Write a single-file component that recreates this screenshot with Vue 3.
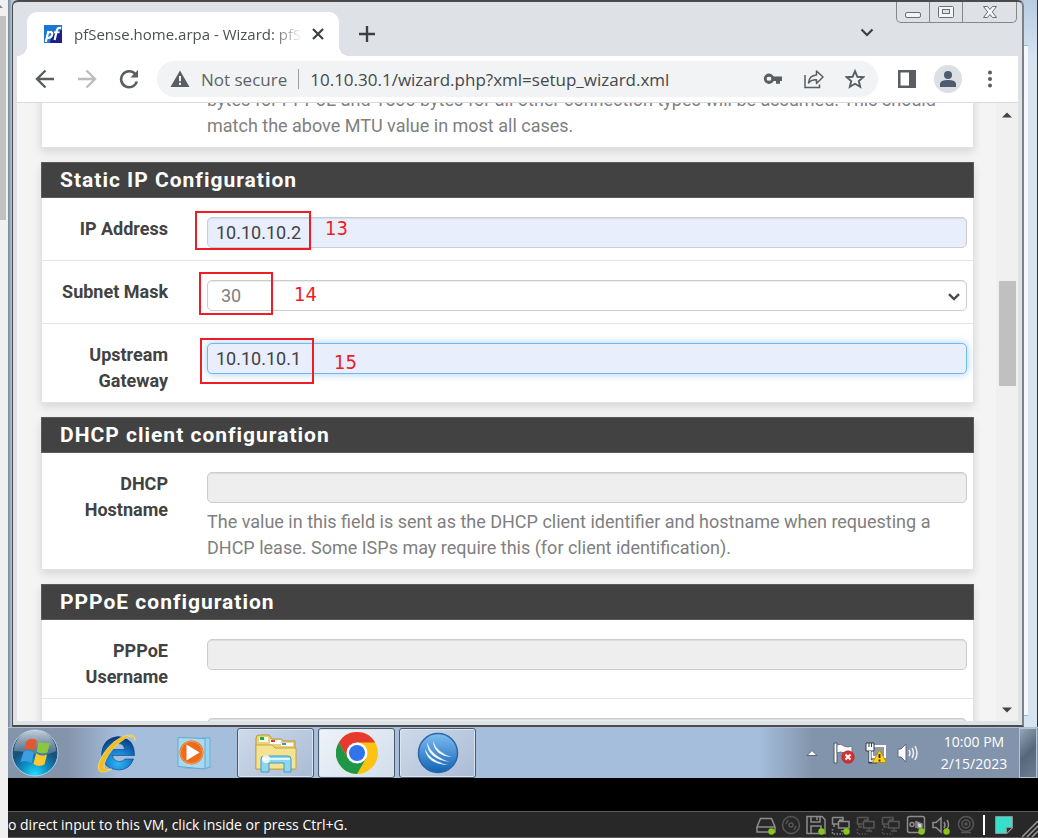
<script setup>
import { ref } from 'vue'

const ipAddress = ref('10.10.10.2')
const subnetMask = ref('30')
const gateway = ref('10.10.10.1')
const dhcpHostname = ref('')
const pppoeUsername = ref('')
const pppoePassword = ref('')
const address = ref('10.10.30.1/wizard.php?xml=setup_wizard.xml')
</script>

<template>
  <div class="host">
    <div class="host-scroll">
      <svg class="host-arrow" viewBox="0 0 8 16"><path d="M0 5 L3 8 H0Z" fill="#8a8a8a" /></svg>
      <div class="host-thumb"></div>
    </div>

    <div class="vm">
      <div class="desktop">
        <main class="window">
          <header class="tabstrip">
            <div class="tab">
              <svg class="favicon" viewBox="0 0 18 18">
                <rect width="18" height="18" fill="#1c1f86" />
                <path d="M0 0H18V5Q10 7 7 13L6 18H0Z" fill="#1976d2" />
                <g fill="none" stroke="#fff" stroke-width="2.2">
                  <path d="M4.4 6 L1.8 17" />
                  <path d="M4 8 Q8.4 5.5 8.2 9.4 Q7.4 13.6 3 12.6" />
                  <path d="M17 3 Q13.5 2.2 12.8 5.4 L10.6 15" />
                  <path d="M10 7.3H15.6" stroke-width="1.8" />
                </g>
              </svg>
              <span class="tab-title">pfSense.home.arpa - Wizard: pfSense</span>
              <button class="icon-btn tab-close" aria-label="Close tab">
                <svg width="12" height="12" viewBox="0 0 12 12"><path d="M1 1 L11 11 M11 1 L1 11" stroke="#3c4043" stroke-width="2.2" /></svg>
              </button>
            </div>
            <button class="icon-btn new-tab" aria-label="New tab">
              <svg width="16" height="16" viewBox="0 0 16 16"><path d="M8 0V16M0 8H16" stroke="#3c4043" stroke-width="2.4" /></svg>
            </button>
            <button class="icon-btn tab-search" aria-label="Search tabs">
              <svg width="14" height="10" viewBox="0 0 14 10"><path d="M1.5 1.5 L7 7 L12.5 1.5" fill="none" stroke="#3c4043" stroke-width="2.2" /></svg>
            </button>
            <div class="win-controls">
              <button class="icon-btn" aria-label="Minimize">
                <svg width="18" height="20" viewBox="0 0 18 20"><rect x="1.5" y="10.5" width="15" height="5" rx="1.5" fill="#f4f5f6" stroke="#6b6d70" /></svg>
              </button>
              <button class="icon-btn" aria-label="Maximize">
                <svg width="18" height="20" viewBox="0 0 18 20" stroke="#6b6d70" fill="#f4f5f6"><rect x="1.5" y="4.5" width="15" height="11" rx="1" /><rect x="5.5" y="7.5" width="7" height="4" fill="#dee1e6" /></svg>
              </button>
              <button class="icon-btn win-close" aria-label="Close">
                <svg width="16" height="20" viewBox="0 0 16 20"><path d="M1.500 4.500H5.500L8 7.400L10.500 4.500H14.500L10.300 9.900L14.500 15.500H10.500L8 12.500L5.500 15.500H1.500L5.700 9.900Z" fill="#f4f5f6" stroke="#6b6d70" /></svg>
              </button>
            </div>
          </header>

          <nav class="toolbar">
            <button class="icon-btn nav-btn" aria-label="Back">
              <svg width="20" height="20" viewBox="0 0 20 20" fill="none" stroke="#5a5e63" stroke-width="2.400"><path d="M19 10H2.500M10.500 1.500L2 10L10.500 18.500" /></svg>
            </button>
            <button class="icon-btn nav-btn" aria-label="Forward">
              <svg width="20" height="20" viewBox="0 0 20 20" fill="none" stroke="#bcbdbf" stroke-width="2.400"><path d="M1 10H17.500M9.500 1.500L18 10L9.500 18.500" /></svg>
            </button>
            <button class="icon-btn nav-btn" aria-label="Reload">
              <svg width="20" height="20" viewBox="0 0 20 20"><path d="M16.200 5A8 8 0 1 0 17.800 12.500" fill="none" stroke="#5a5e63" stroke-width="2.600" /><path d="M19 1V8.600H11.400Z" fill="#5a5e63" /></svg>
            </button>
            <div class="omnibox">
              <svg class="warn" width="20" height="18" viewBox="0 0 20 18"><path d="M10 0.500L19.500 17H0.500Z" fill="#5a5e63" /><path d="M10 6V11.200M10 12.800V15" stroke="#f1f3f4" stroke-width="2" /></svg>
              <span class="insecure">Not secure</span>
              <span class="divider"></span>
              <input v-model="address" class="address" type="text" aria-label="Address" />
              <button class="icon-btn omni-btn" aria-label="Passwords">
                <svg width="20" height="20" viewBox="0 0 20 20"><path fill-rule="evenodd" d="M10.700 7.500A5.200 5.200 0 1 0 10.700 12H13V14.800H17V12H19V7.500ZM6 7.900A1.900 1.900 0 1 1 6 11.600A1.900 1.900 0 1 1 6 7.900Z" fill="#5a5e63" /></svg>
              </button>
              <button class="icon-btn omni-btn" aria-label="Share">
                <svg width="20" height="20" viewBox="0 0 20 20" fill="none" stroke="#5a5e63" stroke-width="1.500"><path d="M1 6V18.500H15.500V15.500" /><path d="M12.500 2V6Q5 6.500 4.500 14Q7 10.500 12.500 10.700V14.500L19 8Z" stroke-linejoin="round" /></svg>
              </button>
              <button class="icon-btn omni-btn" aria-label="Bookmark">
                <svg width="20" height="20" viewBox="0 0 20 20"><path d="M10 2.200L12.400 7.800L18.300 8.200L13.800 12L15.200 17.900L10 14.800L4.800 17.900L6.200 12L1.700 8.200L7.600 7.800Z" fill="none" stroke="#5a5e63" stroke-width="1.900" /></svg>
              </button>
            </div>
            <button class="icon-btn side-btn" aria-label="Side panel">
              <svg width="18" height="18" viewBox="0 0 18 18"><rect x="1.250" y="1.250" width="15.500" height="15.500" fill="#fff" stroke="#5a5e63" stroke-width="2.500" /><rect x="11" y="1" width="6" height="16" fill="#5a5e63" /></svg>
            </button>
            <button class="icon-btn profile" aria-label="Profile">
              <svg width="28" height="28" viewBox="0 0 28 28"><circle cx="14" cy="10" r="4" fill="#4f5b6e" /><path d="M6 22V19Q6 15 14 15Q22 15 22 19V22Z" fill="#4f5b6e" /></svg>
            </button>
            <button class="icon-btn menu-btn" aria-label="Menu">
              <svg width="6" height="18" viewBox="0 0 6 18" fill="#5a5e63"><circle cx="3" cy="2.500" r="2" /><circle cx="3" cy="9" r="2" /><circle cx="3" cy="15.500" r="2" /></svg>
            </button>
          </nav>

          <div class="viewport">
            <div class="page">
              <div class="scrolled">
                <section class="panel">
                  <div class="row">
                    <span></span>
                    <p class="help">bytes for PPPoE and 1500 bytes for all other connection types will be assumed. This should match the above MTU value in most all cases.</p>
                  </div>
                </section>

                <section class="panel">
                  <h2>Static IP Configuration</h2>
                  <div class="row">
                    <label for="ip">IP Address</label>
                    <div class="control">
                      <input id="ip" v-model="ipAddress" class="field filled" type="text" />
                      <span class="mark mark-ip"></span>
                      <span class="num num-ip">13</span>
                    </div>
                  </div>
                  <div class="row">
                    <label for="mask">Subnet Mask</label>
                    <div class="control">
                      <select id="mask" v-model="subnetMask" class="field">
                        <option>30</option>
                      </select>
                      <svg class="caret" width="12" height="8" viewBox="0 0 12 8"><path d="M1 1.200L6 6L11 1.200" fill="none" stroke="#4a4a4a" stroke-width="2.400" /></svg>
                      <span class="mark mark-mask"></span>
                      <span class="num num-mask">14</span>
                    </div>
                  </div>
                  <div class="row">
                    <label for="gw">Upstream Gateway</label>
                    <div class="control">
                      <input id="gw" v-model="gateway" class="field filled active" type="text" />
                      <span class="mark mark-gw"></span>
                      <span class="num num-gw">15</span>
                    </div>
                  </div>
                </section>

                <section class="panel">
                  <h2>DHCP client configuration</h2>
                  <div class="row">
                    <label for="dhcp">DHCP Hostname</label>
                    <div class="control">
                      <input id="dhcp" v-model="dhcpHostname" class="field" type="text" disabled />
                      <p class="help below">The value in this field is sent as the DHCP client identifier and hostname when requesting a DHCP lease. Some ISPs may require this (for client identification).</p>
                    </div>
                  </div>
                </section>

                <section class="panel">
                  <h2>PPPoE configuration</h2>
                  <div class="row">
                    <label for="pppu">PPPoE Username</label>
                    <div class="control"><input id="pppu" v-model="pppoeUsername" class="field" type="text" disabled /></div>
                  </div>
                  <div class="row">
                    <span></span>
                    <div class="control"><input v-model="pppoePassword" class="field" type="password" aria-label="Password" disabled /></div>
                  </div>
                </section>
              </div>
            </div>
            <div class="scrollbar">
              <svg width="10" height="6" viewBox="0 0 10 6"><path d="M0 5.500L5 0.500L10 5.500Z" fill="#444" /></svg>
              <div class="track"><div class="thumb"></div></div>
              <svg width="10" height="6" viewBox="0 0 10 6"><path d="M0 0.500L5 5.500L10 0.500Z" fill="#444" /></svg>
            </div>
          </div>
        </main>
        <aside class="behind"><div class="behind-page"></div></aside>
      </div>

      <footer class="taskbar">
        <button class="icon-btn orb" aria-label="Start">
          <svg width="48" height="48" viewBox="0 0 48 48">
            <defs>
              <radialGradient id="orb" cx="50%" cy="98%" r="85%"><stop offset="0" stop-color="#22e0ff" /><stop offset=".35" stop-color="#0c8fc4" /><stop offset=".7" stop-color="#174f7c" /><stop offset="1" stop-color="#3c5268" /></radialGradient>
              <linearGradient id="gloss" x1="0" y1="0" x2="0" y2="1"><stop offset="0" stop-color="#dbe6ee" stop-opacity=".85" /><stop offset="1" stop-color="#9fb6c8" stop-opacity=".3" /></linearGradient>
            </defs>
            <circle cx="24" cy="24" r="23" fill="url(#orb)" stroke="#a9d0e6" />
            <path d="M3 22A21 21 0 0 1 45 22Q34 28 24 25Q12 22 3 22Z" fill="url(#gloss)" />
            <path d="M15.500 12Q20.500 8 26 11.500L23.500 21.500Q18 18.500 13 21Z" fill="#e4582c" />
            <path d="M28 12.500Q33 15 39 13.500L36.500 23.500Q31 26 25.500 22.500Z" fill="#8cc63f" />
            <path d="M12.500 23Q17.500 20.500 23 23.500L20.500 34Q15.500 31 9.500 33Z" fill="#3b9fe0" />
            <path d="M25 24.500Q30.500 28 36 25.500L33.500 35.500Q28 38.500 22.500 35Z" fill="#fdc82f" />
          </svg>
        </button>
        <button class="icon-btn ie" aria-label="Internet Explorer">
          <svg width="44" height="42" viewBox="0 0 44 42">
            <defs><radialGradient id="ie" cx="50%" cy="80%" r="80%"><stop offset="0" stop-color="#2db4f5" /><stop offset=".55" stop-color="#1377ca" /><stop offset="1" stop-color="#0b3672" /></radialGradient></defs>
            <path fill-rule="evenodd" d="M39.500 23.500H17.500Q18.500 29.500 24.500 29.500Q28 29.500 30 27H38.500Q34.500 38 23.500 38Q7.500 37 6.500 21.500Q8 6 23 4.500Q40 6 39.500 23.500ZM17.500 17.500H29.500Q29 11.500 23.500 11.500Q18.500 12 17.500 17.500Z" fill="url(#ie)" stroke="#0d4180" stroke-width=".600" />
            <path d="M40 8.500Q41 1 31 3.500Q18 7.500 9 21Q0 36 5 39.500Q9 41.500 17 37Q10 39 9 35Q9 28 17 18Q26 8 34 4.500Q39 3.500 40 8.500Z" fill="#f3bd24" stroke="#fbdc67" stroke-width=".800" />
          </svg>
        </button>
        <button class="icon-btn wmp" aria-label="Media Player">
          <svg width="38" height="36" viewBox="0 0 38 36">
            <path d="M8 4L33 2V32L38 31L30 34H8Z" fill="#8db4d2" /><path d="M26 3H33V32L26 34Z" fill="#9bd3ed" stroke="#6aaed0" />
            <path d="M1 2.500L28 3.500V34L1 31.500Z" fill="#a9d9f0" stroke="#62a9cf" /><circle cx="14.500" cy="17.500" r="12" fill="#ed6b1c" /><circle cx="14.500" cy="17.500" r="11" fill="none" stroke="#f6a04f" />
            <path d="M9.500 9.500L22.500 17.500L9.500 25.500Z" fill="#fff" />
          </svg>
        </button>
        <div class="tasks">
          <button class="icon-btn task" aria-label="Explorer">
            <svg width="44" height="40" viewBox="0 0 44 40">
              <path d="M2 36V5Q2 2 5 2H15L18 6H27L30 8H41V36Z" fill="#ead277" stroke="#b7973e" />
              <path d="M5 4H14V9H5ZM16 7H27V11H16ZM27 10H39V13H27Z" fill="#fff" /><path d="M6 4H10V7H6Z" fill="#15b52c" /><path d="M17 7H21V9H17Z" fill="#d5482d" /><path d="M28 10H32V12H28Z" fill="#2a9bea" />
              <path d="M2 36V12H18L21 15H42V36Z" fill="#f6e391" stroke="#c3a54e" />
              <path d="M7 39V26Q7 23 10 23H34Q37 23 37 26V39H30V30H15V39Z" fill="#8ed6f0" stroke="#409cc2" /><path d="M8 26H36" stroke="#d7f6ff" stroke-width="2" /><circle cx="12" cy="26" r="4" fill="#fff" opacity=".800" />
            </svg>
          </button>
          <button class="icon-btn task current" aria-label="Chrome">
            <svg width="42" height="42" viewBox="0 0 42 42">
              <circle cx="21" cy="21" r="21" fill="#fdc312" />
              <path d="M2.800 10.500A21 21 0 0 1 39.200 10.500H21L11.900 26.300Z" fill="#e53a2d" />
              <path d="M2.800 10.500A21 21 0 0 0 21 42L30.100 26.300Q21 34 11.900 26.300Z" fill="#1f9546" />
              <circle cx="21" cy="21" r="10.500" fill="#fff" /><circle cx="21" cy="21" r="8" fill="#2f74ea" />
            </svg>
          </button>
          <button class="icon-btn task" aria-label="Winbox">
            <svg width="42" height="42" viewBox="0 0 42 42">
              <defs><linearGradient id="wb" x1="0" y1="0" x2="0" y2="1"><stop offset="0" stop-color="#7fbdf2" /><stop offset="1" stop-color="#1263b5" /></linearGradient></defs>
              <circle cx="21" cy="21" r="19.500" fill="url(#wb)" stroke="#2a66a3" stroke-width="1.500" />
              <g fill="#eef7ff"><path d="M8 17Q10 32 31 33Q13 29 8 17Z" /><path d="M10 10Q10 27 33 30Q14 24 10 10Z" /><path d="M16 9Q17 24 35 25Q20 21 16 9Z" /></g>
            </svg>
          </button>
        </div>
        <div class="tray">
          <svg width="12" height="8" viewBox="0 0 12 8"><path d="M1 6.500L6 1.500L11 6.500Z" fill="#fff" stroke="#586880" /></svg>
          <svg width="22" height="22" viewBox="0 0 22 22"><path d="M1 1H4V21H1Z" fill="#fff" stroke="#4a5566" /><path d="M4 3Q8 1 11 4Q15 6 19 4V12Q14 14 11 11Q8 9 4 11Z" fill="#fff" stroke="#6b7686" /><circle cx="15" cy="15" r="6.200" fill="#dc2f2f" stroke="#a81d1d" stroke-width=".600" /><path d="M12.500 12.500L17.500 17.500M17.500 12.500L12.500 17.500" stroke="#fff" stroke-width="2" /></svg>
          <svg width="22" height="22" viewBox="0 0 22 22"><path d="M7 4H20V15H7Z" fill="#8d99a8" stroke="#fff" stroke-width="2" /><path d="M5 8V20H12" fill="none" stroke="#303a48" stroke-width="3" /><path d="M1 1H9V9H1Z" fill="#fff" stroke="#303a48" /><path d="M4 1V5M6.500 1V5" stroke="#303a48" /><path d="M5 9V19H12" fill="none" stroke="#fff" stroke-width="1.600" /><path d="M14.500 8L21.500 20.500H7.500Z" fill="#fbd321" stroke="#b98e06" /><path d="M14.500 12V16M14.500 17.500V19.500" stroke="#222" stroke-width="1.800" /></svg>
          <svg width="22" height="22" viewBox="0 0 22 22"><path d="M1 7H4L9 2V20L4 15H1Z" fill="#fff" stroke="#5d6a7c" /><path d="M12 8Q14 11 12 14M15 6Q18 11 15 16M18 4Q22 11 18 18" fill="none" stroke="#eef2f7" stroke-width="1.500" /></svg>
          <time class="clock"><span>10:00 PM</span><span>2/15/2023</span></time>
        </div>
        <button class="icon-btn show-desktop" aria-label="Show desktop"></button>
      </footer>

      <div class="letterbox"></div>

      <div class="statusbar">
        <span class="status-text">o direct input to this VM, click inside or press Ctrl+G.</span>
        <div class="devices">
          <svg class="dev on" viewBox="0 0 20 20"><path d="M4.500 3.500H15.500L19 12V17H1V12ZM1 12H19" /><circle class="dot" cx="15.500" cy="16.500" r="3.200" /></svg>
          <svg class="dev" viewBox="0 0 20 20"><circle cx="10" cy="10" r="8.500" /><circle cx="10" cy="10" r="2" /><path d="M5 9L7 5M13 15L15 11" /></svg>
          <svg class="dev on" viewBox="0 0 20 20"><path d="M1 1.500H16L19 4.500V18.500H1ZM5 1.500V7H14V1.500M11 2V5M5 18V11H15V18" /><circle class="dot" cx="15.500" cy="16.500" r="3.200" /></svg>
          <svg class="dev on" viewBox="0 0 20 20"><path d="M1.500 2.500H12V5H8M1.500 2.500V9H7M7.500 6.500H18V13H7.500ZM10 16H16M3 9V12" /><path d="M1.500 14V19H12" stroke-dasharray="1.500 1.500" /><circle class="dot" cx="15.500" cy="16.500" r="3.200" /></svg>
          <svg class="dev" viewBox="0 0 20 20"><path d="M1.500 2.500H12V5H8M1.500 2.500V9H7M7.500 6.500H18V13H7.500ZM13 13V16M10 16H16M3 9V12H6" /><path d="M1.500 14V19H12" stroke-dasharray="1.500 1.500" /></svg>
          <svg class="dev" viewBox="0 0 20 20"><path d="M1.500 2.500H12V5H8M1.500 2.500V9H7M7.500 6.500H18V13H7.500ZM13 13V16M10 16H16M3 9V12H6" /><path d="M1.500 14V19H12" stroke-dasharray="1.500 1.500" /></svg>
          <svg class="dev on" viewBox="0 0 20 20"><rect x="1.500" y="1.500" width="17" height="16" rx="2" /><circle cx="6" cy="9.500" r="2" /><path d="M10 6V13" /><path d="M11 7L16 9V13H12Z" fill="#ddd" /><circle class="dot" cx="15.500" cy="16.500" r="3.200" /></svg>
          <svg class="dev on" viewBox="0 0 20 20"><path d="M2 7.500H5L10 3V17L5 12.500H2ZM13 7Q15 10 13 13M16 5Q19 10 16 14" /><circle class="dot" cx="15.500" cy="16.500" r="3.200" /></svg>
          <svg class="dev" viewBox="0 0 20 20"><circle cx="10" cy="9" r="7.500" /><circle cx="10" cy="9" r="4" /><circle cx="10" cy="9" r="1" /><path d="M5 17.500H15" /></svg>
        </div>
        <span class="sep"></span>
        <svg class="note" width="18" height="18" viewBox="0 0 18 18"><path d="M0.500 0.500H17.500V12L12 17.500H0.500Z" fill="#38dfca" stroke="#8a8f8f" /><path d="M11.500 17.500V11.500H17.500Z" fill="#333" stroke="#8a8f8f" /></svg>
        <svg class="grip" width="16" height="16" viewBox="0 0 16 16"><path d="M0 16L16 0M5 16L16 5M10 16L16 10" stroke="#9a9a9a" stroke-width="1.500" /></svg>
      </div>
    </div>
  </div>
</template>

<style>
body {
  margin: 0;
  background: #000;
}
</style>

<style scoped>
* {
  box-sizing: border-box;
}
.host {
  display: flex;
  height: 100vh;
  overflow: hidden;
  background: #f0f0f0;
  font-family: "Open Sans", "Noto Sans", sans-serif;
}
.host-scroll {
  flex: 0 0 8px;
}
.host-arrow {
  display: block;
  height: 16px;
}
.host-thumb {
  width: 6px;
  height: 204px;
  background: #c1c1c1;
}
.vm {
  flex: 1;
  min-width: 0;
  display: flex;
  flex-direction: column;
  background: #000;
}
.icon-btn {
  display: flex;
  align-items: center;
  justify-content: center;
  padding: 0;
  border: 0;
  background: none;
}
.icon-btn svg {
  display: block;
}

/* Browser window */
.desktop {
  flex: 1;
  min-height: 0;
  display: flex;
  padding-left: 4px;
  background: linear-gradient(to right, #76869a, #b8c6d6 4px);
}
.window {
  flex: 1;
  min-width: 0;
  display: flex;
  flex-direction: column;
  padding: 0 4px 4px;
  border: 1px solid #4b4b4d;
  border-width: 2px 2px 2px 1px;
  border-right-color: #7d8188;
  border-radius: 6px 6px 0 0;
  background: #dee1e6;
}
.tabstrip {
  display: flex;
  height: 54px;
  padding: 0 1px 0 10px;
}
.tab {
  position: relative;
  flex: 0 1 312px;
  min-width: 0;
  display: flex;
  align-items: center;
  margin-top: 10px;
  padding: 0 15px 0 17px;
  border-radius: 10px 10px 0 0;
  background: #fff;
}
.tab::before,
.tab::after {
  content: "";
  position: absolute;
  bottom: 0;
  width: 10px;
  height: 10px;
}
.tab::before {
  left: -10px;
  background: radial-gradient(circle at 0 0, transparent 10px, #fff 10px);
}
.tab::after {
  right: -10px;
  background: radial-gradient(circle at 100% 0, transparent 10px, #fff 10px);
}
.favicon {
  flex: none;
  width: 18px;
  height: 18px;
}
.tab-title {
  flex: 1;
  min-width: 0;
  margin: 0 9px 0 12px;
  overflow: hidden;
  white-space: nowrap;
  font-size: 15px;
  line-height: 24px;
  color: #4c4f53;
  mask-image: linear-gradient(to right, #000 86%, transparent);
}
.new-tab {
  margin: 10px 0 0 20px;
  height: 44px;
}
.tab-search {
  height: 22px;
  margin: 20px 22px 0 auto;
}
.win-controls {
  display: flex;
  height: 21px;
  border: 1px solid #85878b;
  border-top: 0;
  border-radius: 0 0 5px 5px;
}
.win-controls .icon-btn {
  width: 33px;
  border-right: 1px solid #85878b;
}
.win-controls .win-close {
  width: 53px;
  border: 0;
}
.toolbar {
  display: flex;
  align-items: center;
  height: 47px;
  padding: 0 25px 0 18px;
  border-bottom: 1px solid #d9dbde;
  background: #fff;
}
.nav-btn {
  margin-right: 22px;
}
.omnibox {
  flex: 1;
  min-width: 0;
  display: flex;
  align-items: center;
  height: 36px;
  margin-right: 20px;
  margin-left: -4px;
  padding: 0 13px;
  border-radius: 18px;
  background: #f1f3f4;
  font-size: 17px;
}
.warn {
  margin-right: 11px;
}
.insecure {
  color: #5f6368;
}
.divider {
  width: 1px;
  height: 20px;
  margin: 0 11px;
  background: #9b9ea2;
}
.address {
  flex: 1;
  min-width: 0;
  padding: 0;
  border: 0;
  background: none;
  font: inherit;
  color: #45484c;
}
.omni-btn {
  margin-left: 21px;
}
.profile {
  margin: 0 25px 0 18px;
  border-radius: 50%;
  background: #dcdfe4;
}
.menu-btn {
  width: 6px;
}

/* Wizard page */
.viewport {
  flex: 1;
  min-height: 0;
  display: flex;
  font-family: Roboto, sans-serif;
}
.page {
  flex: 1;
  min-width: 0;
  overflow: hidden;
  padding: 0 22px 0 24px;
  background: #f4f4f4;
}
.scrolled {
  margin-top: -34px;
}
.panel {
  margin-bottom: 14px;
  border: 1px solid #e2e2e2;
  border-top: 0;
  background: #fff;
  box-shadow: 0 4px 9px rgba(0, 0, 0, 0.12);
}
h2 {
  margin: 0 -1px;
  padding: 0 18px;
  border: 1px solid #5b5b5b;
  background: #424242;
  color: #fff;
  font-size: 21px;
  font-weight: 700;
  line-height: 34px;
  letter-spacing: 1px;
}
.row {
  display: grid;
  grid-template-columns: 126px 1fr;
  column-gap: 39px;
  padding: 18px 6px 8px 0;
  border-bottom: 1px solid #e4e4e4;
  font-size: 18px;
  line-height: 26px;
}
.row:last-child {
  border-bottom: 0;
}
label {
  padding-left: 18px;
  text-align: right;
  font-weight: 700;
  color: #424242;
}
.control {
  position: relative;
  min-height: 36px;
  padding-top: 1px;
}
.field {
  display: block;
  width: 100%;
  height: 31px;
  padding: 0 8px;
  border: 1px solid #ccc;
  border-radius: 5px;
  background: #fff;
  box-shadow: inset 0 1px 1px rgba(0, 0, 0, 0.08);
  color: #424242;
  font: 18px Roboto, sans-serif;
}
select.field {
  appearance: none;
  padding-left: 13px;
  color: #808080;
}
.filled {
  background: #e8eefc;
}
.active {
  border-color: #74b6ee;
  outline: 0;
  box-shadow: 0 0 9px rgba(102, 175, 233, 0.6);
}
.field:disabled {
  background: #eee;
}
.caret {
  position: absolute;
  top: 14px;
  right: 7px;
}
.help {
  margin: 0;
  color: #808080;
}
.below {
  margin-top: 6px;
}
.mark {
  position: absolute;
  border: 2px solid #ee1c25;
}
.mark-ip {
  left: -12px;
  top: -5px;
  width: 116px;
  height: 39px;
}
.mark-mask {
  left: -8px;
  top: -7px;
  width: 74px;
  height: 43px;
}
.mark-gw {
  left: -7px;
  top: -4px;
  width: 114px;
  height: 46px;
}
.num {
  position: absolute;
  color: #ee1c25;
  font: 20px/20px "DejaVu Sans Condensed", "DejaVu Sans", sans-serif;
}
.num-ip {
  left: 118px;
  top: 2px;
}
.num-mask {
  left: 87px;
  top: 5px;
}
.num-gw {
  left: 127px;
  top: 10px;
}
.scrollbar {
  flex: 0 0 22px;
  display: flex;
  flex-direction: column;
  align-items: center;
  padding: 9px 0 8px;
  background: #f0f0f0;
}
.track {
  flex: 1;
  width: 17px;
  padding-top: 163px;
}
.thumb {
  height: 105px;
  background: #c0c0c0;
}
.behind {
  flex: 0 0 14px;
  padding: 45px 9px 11px 0;
  border-right: 1px solid #333;
  background: linear-gradient(#b9cce0, #d6e4f2 60px);
}
.behind-page {
  height: 100%;
  border: solid #9fb4cc;
  border-width: 1px 0;
  background: #f4f8fc;
}

/* Guest taskbar */
.taskbar {
  display: flex;
  align-items: center;
  height: 51px;
  padding-left: 3px;
  border-top: 1px solid #aebfd3;
  background: linear-gradient(to right, #8494ab 60px, #a5bedc 110px, #a5bedc calc(100% - 280px), #8294ab calc(100% - 225px));
}
.ie {
  margin-left: 36px;
}
.wmp {
  margin-left: 38px;
}
.tasks {
  display: flex;
  gap: 4px;
  margin-left: 22px;
}
.task {
  width: 77px;
  height: 50px;
  border: 1px solid #4c596b;
  border-radius: 3px;
  background: linear-gradient(135deg, #cfdae9, #a9bcd6);
  box-shadow: inset 0 0 0 1px #dbe5f1;
}
.current {
  background: linear-gradient(135deg, #eef3f9, #d2deed);
}
.tray {
  display: flex;
  align-items: center;
  gap: 10px;
  margin-left: auto;
}
.tray svg:first-child {
  margin-right: 5px;
}
.clock {
  display: flex;
  flex-direction: column;
  align-items: center;
  width: 90px;
  font-size: 14px;
  line-height: 22px;
  color: #fff;
}
.show-desktop {
  width: 18px;
  height: 50px;
  margin-right: 1px;
  border: 1px solid #b6c3d3;
  background: linear-gradient(135deg, #96a5b8, #56667b 50%, #6d7d92);
}
.letterbox {
  flex: 0 0 33px;
}

/* Hypervisor status bar */
.statusbar {
  display: flex;
  align-items: center;
  height: 27px;
  border-top: 1px solid #5c5c5c;
  border-bottom: 1px solid #5a5a5a;
  background: #282828;
}
.status-text {
  flex: 1;
  overflow: hidden;
  white-space: nowrap;
  font-size: 14px;
  line-height: 22px;
  color: #fff;
}
.devices {
  display: flex;
  gap: 5px;
}
.dev {
  width: 20px;
  height: 20px;
  fill: none;
  stroke: #565656;
  stroke-width: 1.5;
}
.dev.on {
  stroke: #8c8c8c;
}
.dev .dot {
  fill: #86c818;
  stroke: none;
}
.sep {
  width: 2px;
  height: 20px;
  margin: 0 10px 0 7px;
  background: #fff;
}
.grip {
  align-self: flex-end;
  margin-left: 9px;
}
</style>
